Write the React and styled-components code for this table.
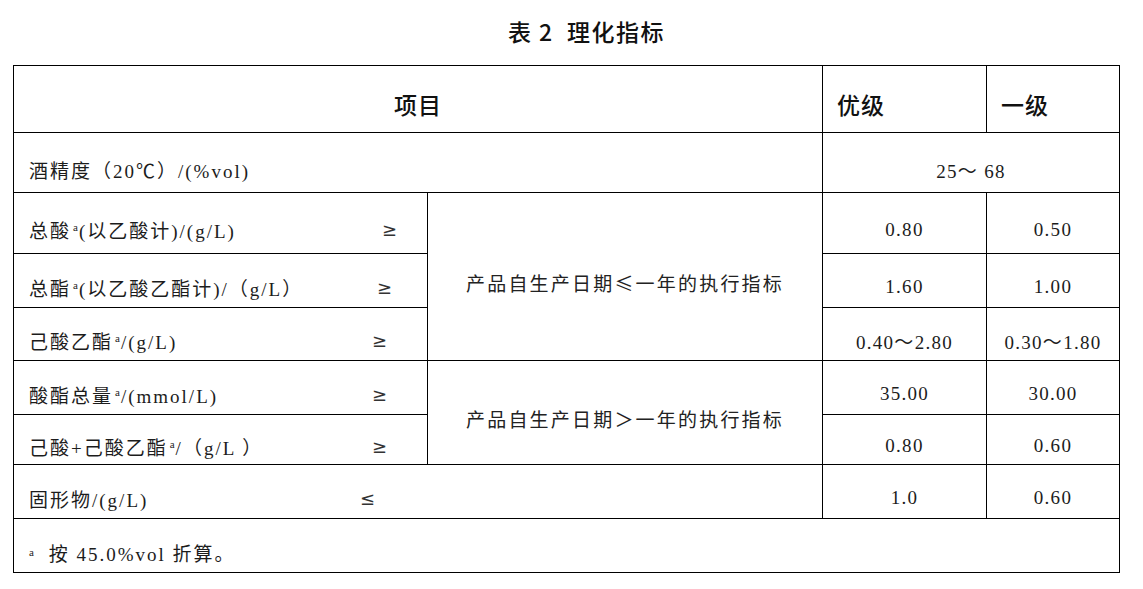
import React from 'react';
import styled, {createGlobalStyle} from 'styled-components';

const Global = createGlobalStyle`
  html, body {
    margin: 0;
    padding: 0;
    background: #fff;
  }
  body {
    font-family: "Liberation Serif", "Noto Sans CJK SC", serif;
    color: #1c1c1c;
  }
`

const Page = styled.div`
  width: 1143px;
  padding-left: 13px;
  box-sizing: border-box;
`

const Title = styled.div`
  width: 1107px;
  height: 65px;
  box-sizing: border-box;
  display: flex;
  align-items: center;
  justify-content: center;
  padding: 0 0 3px 40px;
  font-family: "Noto Sans CJK SC", sans-serif;
  font-weight: 500;
  font-size: 23px;
  letter-spacing: 1.5px;
  color: #111;
  white-space: pre;
`

const Table = styled.div`
  display: grid;
  width: 1107px;
  box-sizing: border-box;
  grid-template-columns: 414px 395px 164px 133px;
  grid-template-rows: 67px 60px 61px 54px 53px 54px 50px 54px 54px;
  border-top: 1px solid #000;
  border-left: 1px solid #000;
`

const Cell = styled.div`
  grid-column: ${p => p.$col || 'auto'};
  grid-row: ${p => p.$row || 'auto'};
  border-right: 1px solid #000;
  border-bottom: 1px solid #000;
  display: flex;
  align-items: center;
  justify-content: ${p => p.$align || 'flex-start'};
  padding: ${p => p.$pt || 13}px 0 0 ${p => p.$pl || 0}px;
  box-sizing: border-box;
  font-size: 19px;
  letter-spacing: 2px;
  white-space: pre;
`

const Head = styled(Cell)`
  font-family: "Noto Sans CJK SC", sans-serif;
  font-weight: 500;
  font-size: 23px;
  letter-spacing: 1px;
  color: #111;
`

const Num = styled(Cell)`
  letter-spacing: 1.3px;
  justify-content: center;
`

const LabelText = styled.span`
  flex: 0 0 ${p => p.$w}px;
`

const Sign = styled.span`
  font-family: "DejaVu Sans", sans-serif;
  font-size: 18px;
  letter-spacing: 0;
  color: #333;
`

const Sup = styled.sup`
  font-family: "Liberation Serif", serif;
  font-size: 11px;
  letter-spacing: 0;
  vertical-align: 7px;
  line-height: 0;
  margin: 0 ${p => p.$mr || 1}px 0 2px;
`

const Merged = styled(Cell)`
  font-family: "Noto Sans CJK SC", sans-serif;
  font-size: 19px;
  letter-spacing: 2.2px;
  color: #222;
`

const Label = ({children, x, sign = '≥', col}) => (
  <Cell $pl={15} $col={col}>
    <LabelText $w={x - 29}>{children}</LabelText>
    <Sign>{sign}</Sign>
  </Cell>
)

export default function App() {
  return (
    <Page>
      <Global />
      <Title>{'表 2  理化指标'}</Title>
      <Table>
        <Head $col="1 / 3" $align="center" $pt={9}>项目</Head>
        <Head $pl={14} $pt={9}>优级</Head>
        <Head $pl={14} $pt={9}>一级</Head>

        <Cell $col="1 / 3" $pl={15}>酒精度（20℃）/(%vol)</Cell>
        <Num $col="3 / 5">{'25～ 68'}</Num>

        <Label x={382}>总酸<Sup>a</Sup>(以乙酸计)/(g/L)</Label>
        <Merged $row="span 3" $align="center" $pt={12}>产品自生产日期≤一年的执行指标</Merged>
        <Num>0.80</Num>
        <Num>0.50</Num>

        <Label x={377}>总酯<Sup>a</Sup>(以乙酸乙酯计)/（g/L）</Label>
        <Num>1.60</Num>
        <Num>1.00</Num>

        <Label x={372}>己酸乙酯<Sup>a</Sup>/(g/L)</Label>
        <Num>0.40～2.80</Num>
        <Num>0.30～1.80</Num>

        <Label x={372}>酸酯总量<Sup>a</Sup>/(mmol/L)</Label>
        <Merged $row="span 2" $align="center" $pt={12}>产品自生产日期＞一年的执行指标</Merged>
        <Num>35.00</Num>
        <Num>30.00</Num>

        <Label x={372}>己酸+己酸乙酯<Sup>a</Sup>/（g/L ）</Label>
        <Num>0.80</Num>
        <Num>0.60</Num>

        <Label x={360} sign="≤" col="1 / 3">固形物/(g/L)</Label>
        <Num>1.0</Num>
        <Num>0.60</Num>

        <Cell $col="1 / 5" $pl={13}><Sup $mr={8}>a</Sup>{' 按 45.0%vol 折算。'}</Cell>
      </Table>
    </Page>
  );
}
